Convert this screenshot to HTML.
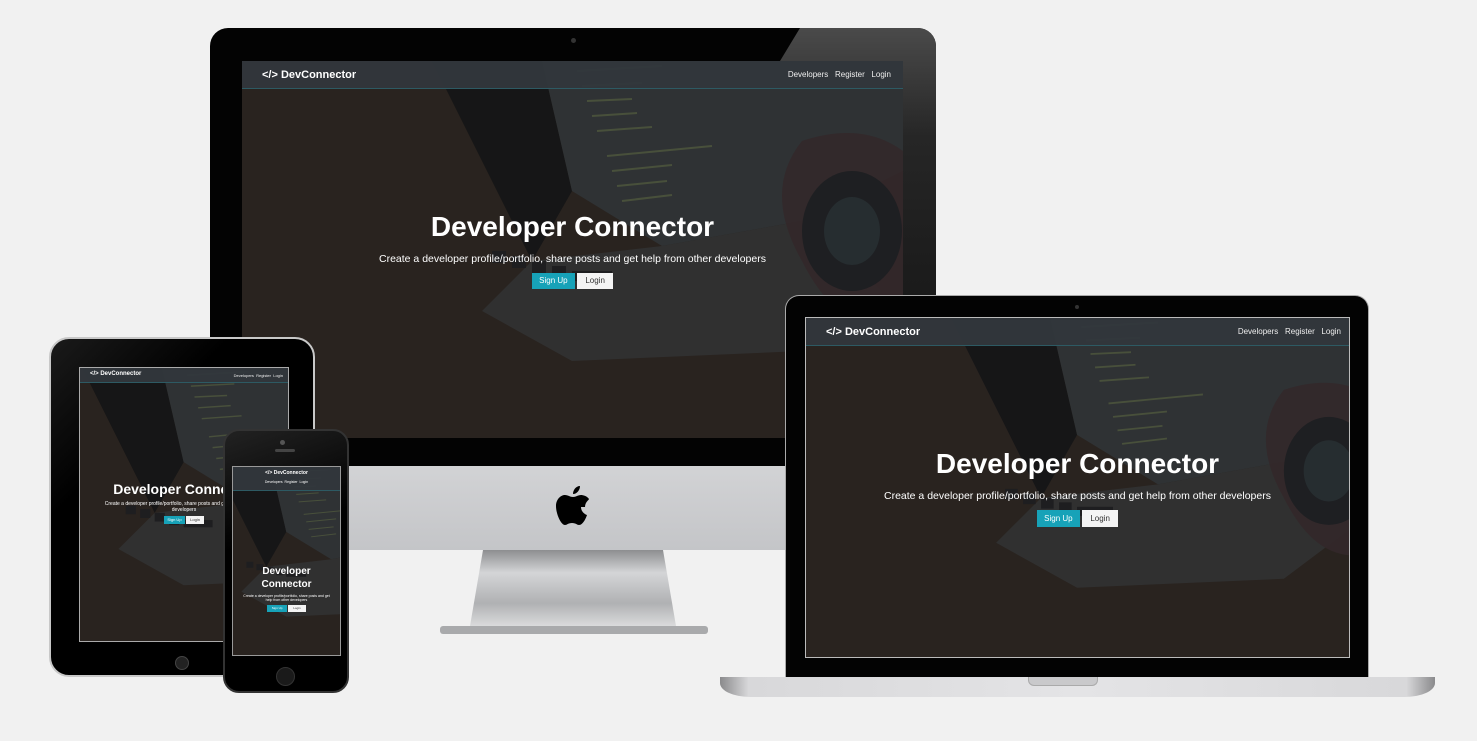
<!DOCTYPE html>
<html><head><meta charset="utf-8"><style>
*{margin:0;padding:0;box-sizing:border-box}
body{width:1477px;height:741px;background:#f1f1f1;position:relative;overflow:hidden;font-family:"Liberation Sans",Arial,sans-serif}
.a{position:absolute}
.scr{position:absolute;overflow:hidden;background:#2a2421}
.scr svg.bg{position:absolute;left:0;top:0;width:100%;height:100%}
.nav{position:absolute;left:0;top:0;right:0;background:rgba(50,55,60,.95);border-bottom:1px solid #2d5a63;color:#fff;font-weight:bold}
.nav .r{position:absolute;right:0;top:0;font-weight:normal;color:#eee}
.hero{position:absolute;left:0;right:0;text-align:center;color:#fff}
.hero h1{font-weight:bold}
.btn{display:inline-block;vertical-align:top}
.su{background:#17a2b8;color:#fff}
.lg{background:#f4f4f4;color:#333}
</style></head><body>

<svg width="0" height="0" style="position:absolute">
<defs>
<symbol id="bgimg" viewBox="0 0 661 377" preserveAspectRatio="xMidYMid slice">
<rect width="661" height="377" fill="#29231f"/>
<polygon points="190,0 300,0 330,130 290,200" fill="#161617"/>
<polygon points="300,0 661,0 661,110 560,160 420,185 330,130" fill="#2f3234"/>
<g stroke="#5a6440" stroke-width="2" opacity=".6">
<line x1="335" y1="10" x2="420" y2="5"/><line x1="340" y1="25" x2="400" y2="22"/><line x1="345" y1="40" x2="390" y2="38"/><line x1="350" y1="55" x2="395" y2="52"/><line x1="355" y1="70" x2="410" y2="66"/><line x1="365" y1="95" x2="470" y2="85"/><line x1="370" y1="110" x2="430" y2="104"/><line x1="375" y1="125" x2="425" y2="120"/><line x1="380" y1="140" x2="430" y2="134"/>
</g>
<polygon points="290,200 420,185 560,160 640,230 560,290 330,300 240,250" fill="#323335" opacity=".8"/>
<g fill="#1e1e20"><rect x="250" y="190" width="14" height="12"/><rect x="270" y="195" width="14" height="12"/><rect x="290" y="200" width="14" height="12"/><rect x="310" y="205" width="14" height="12"/><rect x="330" y="210" width="40" height="10"/></g>
<path d="M560 80 Q620 60 661 90 L661 260 Q600 280 560 200 Q520 130 560 80Z" fill="#33282a" opacity=".9"/>
<ellipse cx="610" cy="170" rx="50" ry="60" fill="#1e1f22"/>
<ellipse cx="610" cy="170" rx="28" ry="34" fill="#262d30"/>
</symbol>
</defs></svg>

<!-- iMac -->
<div class="a" style="left:210px;top:28px;width:726px;height:440px;background:#030303;border-radius:18px 18px 0 0"></div>
<div class="a" style="left:780px;top:28px;width:156px;height:272px;background:linear-gradient(180deg,#4a4a4a,#262626 40%,#1a1a1a);clip-path:polygon(20px 0,100% 0,100% 100%,123px 100%,123px 33px,0 33px);border-radius:0 18px 0 0"></div>
<div class="a" style="left:571px;top:38px;width:5px;height:5px;border-radius:50%;background:#333"></div>
<div class="a" style="left:210px;top:466px;width:726px;height:84px;background:linear-gradient(#d2d3d5,#c4c5c8)"></div>
<svg class="a" style="left:554px;top:484px" width="38" height="44" viewBox="0 0 38 44"><path d="M26 2c0 4-3 8-7 8 0-4 3-8 7-8zM31 23c0-5 4-7 4-8-2-3-6-4-8-4-3 0-5 2-8 2s-5-2-8-2c-4 0-9 4-9 11 0 8 5 19 9 19 2 0 3-2 7-2s5 2 7 2c4 0 7-7 8-10-3-1-6-4-6-8z" fill="#000"/></svg>
<svg class="a" style="left:438px;top:550px" width="272" height="86" viewBox="0 0 272 86"><defs><linearGradient id="st" x1="0" y1="0" x2="0" y2="1"><stop offset="0" stop-color="#8d8e90"/><stop offset=".3" stop-color="#d4d5d7"/><stop offset=".7" stop-color="#b0b1b3"/><stop offset="1" stop-color="#dadbdc"/></linearGradient></defs><polygon points="45,0 225,0 238,76 32,76" fill="url(#st)"/><rect x="2" y="76" width="268" height="8" rx="3" fill="#a9aaac"/></svg>

<div class="scr" style="left:242px;top:61px;width:661px;height:377px">
<svg class="bg"><use href="#bgimg"/></svg>
<div class="nav" style="height:28px;font-size:11px;padding:8px 0 0 20px">&lt;/&gt; DevConnector<span class="r" style="font-size:8px;padding:9px 12px 0 0">Developers&nbsp;&nbsp; Register&nbsp;&nbsp; Login</span></div>
<div class="hero" style="top:150px"><h1 style="font-size:28px;line-height:32px">Developer Connector</h1><div style="font-size:10.5px;margin-top:10px">Create a developer profile/portfolio, share posts and get help from other developers</div>
<div style="margin-top:8px;font-size:8px;line-height:16px"><span class="btn su" style="width:43px">Sign Up</span> <span class="btn lg" style="width:36px">Login</span></div></div>
</div>

<!-- Laptop -->
<div class="a" style="left:785px;top:295px;width:584px;height:383px;background:#030303;border-radius:14px 14px 0 0;border:1px solid #aaa;border-bottom:none"></div>
<div class="a" style="left:1075px;top:305px;width:4px;height:4px;border-radius:50%;background:#333"></div>
<div class="scr" style="left:805px;top:317px;width:545px;height:341px;border:1px solid #bbb">
<svg class="bg"><use href="#bgimg"/></svg>
<div class="nav" style="height:28px;font-size:11px;padding:8px 0 0 20px">&lt;/&gt; DevConnector<span class="r" style="font-size:8px;padding:9px 8px 0 0">Developers&nbsp;&nbsp; Register&nbsp;&nbsp; Login</span></div>
<div class="hero" style="top:130px"><h1 style="font-size:28px;line-height:32px">Developer Connector</h1><div style="font-size:10.5px;margin-top:10px">Create a developer profile/portfolio, share posts and get help from other developers</div>
<div style="margin-top:8px;font-size:8px;line-height:17px"><span class="btn su" style="width:43px">Sign Up</span> <span class="btn lg" style="width:36px">Login</span></div></div>
</div>
<div class="a" style="left:720px;top:677px;width:715px;height:20px;background:linear-gradient(90deg,#8a8a8c 0%,#d8d8da 4%,#e4e4e6 50%,#d8d8da 96%,#8a8a8c 100%);border-radius:0 0 30px 30px/0 0 14px 14px"></div>
<div class="a" style="left:1028px;top:677px;width:70px;height:9px;background:#c9c9cb;border-radius:0 0 6px 6px;border:1px solid #aaa;border-top:none"></div>

<!-- iPad -->
<div class="a" style="left:49px;top:337px;width:266px;height:340px;background:linear-gradient(135deg,#1a1a1a,#000 30%);border-radius:20px;border:2px solid #c8c8c8"></div>
<div class="scr" style="left:79px;top:367px;width:210px;height:275px;border:1px solid #aaa">
<svg class="bg"><use href="#bgimg"/></svg>
<div class="nav" style="height:15px;font-size:6px;padding:3px 0 0 10px">&lt;/&gt; DevConnector<span class="r" style="font-size:4px;padding:5px 5px 0 0">Developers&nbsp; Register&nbsp; Login</span></div>
<div class="hero" style="top:113px"><h1 style="font-size:14px;line-height:16px">Developer Connector</h1><div style="font-size:5px;margin-top:4px;padding:0 20px">Create a developer profile/portfolio, share posts and get help from other developers</div>
<div style="margin-top:3px;font-size:4px;line-height:8px"><span class="btn su" style="width:21px">Sign Up</span> <span class="btn lg" style="width:18px">Login</span></div></div>
</div>
<div class="a" style="left:175px;top:656px;width:14px;height:14px;border-radius:50%;background:#222;border:1px solid #444"></div>

<!-- iPhone -->
<div class="a" style="left:223px;top:429px;width:126px;height:264px;background:linear-gradient(160deg,#222,#000 40%);border-radius:16px;border:2px solid #333"></div>
<div class="a" style="left:280px;top:440px;width:5px;height:5px;border-radius:50%;background:#555"></div>
<div class="a" style="left:275px;top:449px;width:20px;height:3px;border-radius:2px;background:#444"></div>
<div class="scr" style="left:232px;top:466px;width:109px;height:190px;border:1px solid #999">
<svg class="bg"><use href="#bgimg"/></svg>
<div class="nav" style="height:24px;font-size:5px;text-align:center;padding-top:3px">&lt;/&gt; DevConnector<div style="font-size:3.5px;font-weight:normal;margin-top:4px">Developers&nbsp; Register&nbsp; Login</div></div>
<div class="hero" style="top:98px"><h1 style="font-size:10px;line-height:13px">Developer<br>Connector</h1><div style="font-size:3.5px;margin-top:3px;padding:0 8px">Create a developer profile/portfolio, share posts and get help from other developers</div>
<div style="margin-top:3px;font-size:3px;line-height:7px"><span class="btn su" style="width:20px">Sign Up</span> <span class="btn lg" style="width:18px">Login</span></div></div>
</div>
<div class="a" style="left:276px;top:667px;width:19px;height:19px;border-radius:50%;background:#1a1a1a;border:1px solid #333"></div>

</body></html>
